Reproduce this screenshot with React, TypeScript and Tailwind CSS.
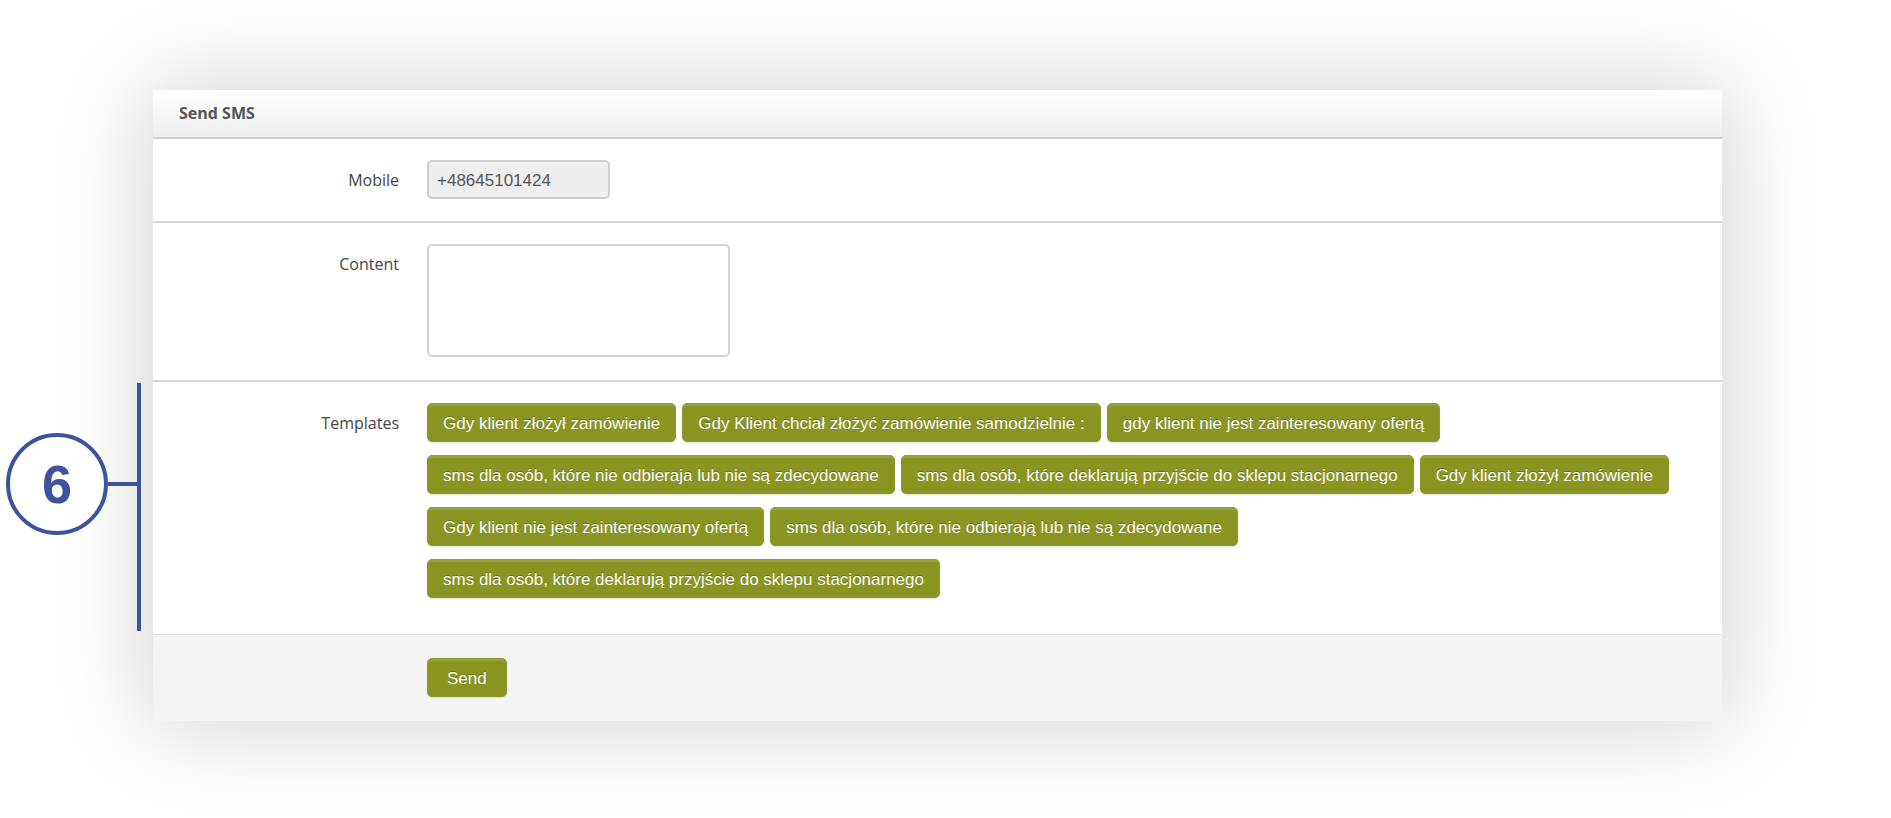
import React, { useState } from 'react';

const templates = [
  'Gdy klient złożył zamówienie',
  'Gdy Klient chciał złożyć zamówienie samodzielnie :',
  'gdy klient nie jest zainteresowany ofertą',
  'sms dla osób, które nie odbieraja lub nie są zdecydowane',
  'sms dla osób, które deklarują przyjście do sklepu stacjonarnego',
  'Gdy klient złożył zamówienie',
  'Gdy klient nie jest zainteresowany ofertą',
  'sms dla osób, które nie odbierają lub nie są zdecydowane',
  'sms dla osób, które deklarują przyjście do sklepu stacjonarnego',
];

const buttonClass =
  "h-[39px] rounded-[5px] border border-[#8f9a2c] bg-[#8a9420] pt-[2px] font-['Liberation_Sans',sans-serif] text-[17px] leading-5 text-white shadow-[inset_0_2px_0_rgba(255,255,255,0.12),0_1px_2px_rgba(0,0,0,0.12)] [text-shadow:0_-1px_0_rgba(0,0,0,0.25)]";

const labelClass = 'w-[246px] shrink-0 pt-2 text-right text-base leading-6 text-[#444444]';

const StepMarker: React.FC<{ step: number }> = ({ step }) => (
  <div className="absolute top-px bottom-[3px] right-full mr-3 w-[135px] text-[#3f529c]">
    <div className="absolute inset-y-0 right-0 w-1 bg-[#3f529c]" />
    <div className="absolute top-[50px] left-0 flex items-center">
      <span className="flex size-[102px] items-center justify-center rounded-full border-4 border-[#3f529c] bg-white font-['Liberation_Sans',sans-serif] text-[54px] leading-none font-bold">
        {step}
      </span>
      <span className="h-1 w-[30px] bg-[#3f529c]" />
    </div>
  </div>
);

const App: React.FC = () => {
  const [content, setContent] = useState('');

  const handleSubmit = (e: React.FormEvent) => {
    e.preventDefault();
  };

  return (
    <div className="bg-white pt-[90px] pr-[169px] pb-[97px] pl-[153px] font-['Open_Sans',sans-serif]">
      <form
        onSubmit={handleSubmit}
        className="relative bg-white shadow-[0_0_90px_rgba(0,0,0,0.2)]"
      >
        <h1 className="border-b-2 border-[#cfcfcf] bg-linear-to-b from-white to-[#efefef] px-[26px] pt-[11px] pb-3 text-base leading-6 font-bold text-[#555555]">
          Send SMS
        </h1>

        {/* Mobile */}
        <div className="flex gap-7 border-b-2 border-[#d6d6d6] pt-[21px] pb-[22px]">
          <label htmlFor="mobile" className={labelClass}>
            Mobile
          </label>
          <input
            id="mobile"
            type="text"
            readOnly
            value="+48645101424"
            className="h-[39px] w-[183px] rounded-[5px] border-2 border-[#cecece] bg-[#eeeeee] px-2 pt-[3px] font-['Liberation_Sans',sans-serif] text-[17px] text-[#555555] outline-none"
          />
        </div>

        {/* Content */}
        <div className="flex gap-7 border-b-2 border-[#d6d6d6] pt-[21px] pb-[23px]">
          <label htmlFor="content" className={labelClass}>
            Content
          </label>
          <textarea
            id="content"
            value={content}
            onChange={(e) => setContent(e.target.value)}
            className="h-[113px] w-[303px] resize-none rounded-[5px] border-2 border-[#d2d2d2] bg-white px-2 py-1 font-['Liberation_Sans',sans-serif] text-[17px] text-[#555555] outline-none"
          />
        </div>

        {/* Templates */}
        <div className="relative flex gap-7 pt-[21px] pr-6 pb-9">
          <StepMarker step={6} />
          <span id="templates-label" className={labelClass}>
            Templates
          </span>
          <div
            role="group"
            aria-labelledby="templates-label"
            className="flex flex-wrap gap-x-[6px] gap-y-[13px]"
          >
            {templates.map((text, index) => (
              <button
                key={index}
                type="button"
                onClick={() => setContent(text)}
                className={`${buttonClass} px-[15px]`}
              >
                {text}
              </button>
            ))}
          </div>
        </div>

        {/* Submit */}
        <div className="border-t border-[#e0e0e0] bg-[#f4f4f4] pt-[23px] pb-6 pl-[274px]">
          <button type="submit" className={`${buttonClass} px-[19px]`}>
            Send
          </button>
        </div>
      </form>
    </div>
  );
};

export default App;
